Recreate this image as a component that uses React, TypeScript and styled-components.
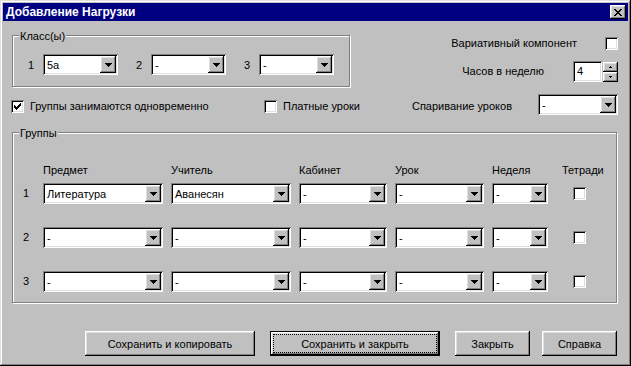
import styled, { createGlobalStyle, css } from "styled-components";

const GlobalStyle = createGlobalStyle`
  html, body {
    margin: 0;
    padding: 0;
    background: #c0c0c0;
  }
  body {
    font-family: "Liberation Sans", Arial, sans-serif;
    font-size: 11px;
    color: #000;
  }
`;

const raised = css`
  box-shadow: inset -1px -1px #000, inset 1px 1px #fff, inset -2px -2px #808080,
    inset 2px 2px #dfdfdf;
`;

const sunken = css`
  box-shadow: inset 1px 1px #808080, inset -1px -1px #fff, inset 2px 2px #000,
    inset -2px -2px #dfdfdf;
`;

const subjects = ["Литература", "-", "-"];
const teachers = ["Аванесян", "-", "-"];

const App = () => {
  return (
    <>
      <GlobalStyle />
      <Window>
        <TitleBar>
          <Title>Добавление Нагрузки</Title>
          <CloseButton>
            <svg width="8" height="7" viewBox="0 0 8 7" shapeRendering="crispEdges">
              <path
                d="M0 0h2v1H0zM6 0h2v1H6zM1 1h2v1H1zM5 1h2v1H5zM2 2h4v1H2zM3 3h2v1H3zM2 4h4v1H2zM1 5h2v1H1zM5 5h2v1H5zM0 6h2v1H0zM6 6h2v1H6z"
                fill="#000"
              />
            </svg>
          </CloseButton>
        </TitleBar>
        <Body>
          <TopArea>
            <Frame $w={338} $mt={14}>
              <FrameLabel>Класс(ы)</FrameLabel>
              <ClassRow>
                {["5а", "-", "-"].map((v, i) => (
                  <ClassItem key={i}>
                    <ClassNum>{i + 1}</ClassNum>
                    <Combo value={v} width={75} />
                  </ClassItem>
                ))}
              </ClassRow>
            </Frame>
            <RightColumn>
              <RightRow $gap={28}>
                <Text>Вариативный компонент</Text>
                <CheckBox />
              </RightRow>
              <RightRow $gap={29} $mt={11}>
                <Text>Часов в неделю</Text>
                <SpinEdit>
                  <EditField>4</EditField>
                  <SpinButtons>
                    <SpinButton>
                      <svg width="3" height="2" viewBox="0 0 3 2" shapeRendering="crispEdges">
                        <path d="M1 0h1v1H1zM0 1h3v1H0z" fill="#000" />
                      </svg>
                    </SpinButton>
                    <SpinButton>
                      <svg width="3" height="2" viewBox="0 0 3 2" shapeRendering="crispEdges">
                        <path d="M0 0h3v1H0zM1 1h1v1H1z" fill="#000" />
                      </svg>
                    </SpinButton>
                  </SpinButtons>
                </SpinEdit>
              </RightRow>
            </RightColumn>
          </TopArea>

          <OptionsRow>
            <Option $w={253} $ml={-1}>
              <CheckBox checked />
              <Text>Группы занимаются одновременно</Text>
            </Option>
            <Option>
              <CheckBox />
              <Text>Платные уроки</Text>
            </Option>
            <Pairing>
              <PairingLabel>Спаривание уроков</PairingLabel>
              <Combo value="-" width={80} />
            </Pairing>
          </OptionsRow>

          <Frame $mt={17} $mr={1}>
            <FrameLabel>Группы</FrameLabel>
            <GroupsBody>
              <GridRow $header>
                <span />
                <HeaderCell>Предмет</HeaderCell>
                <HeaderCell>Учитель</HeaderCell>
                <HeaderCell>Кабинет</HeaderCell>
                <HeaderCell>Урок</HeaderCell>
                <HeaderCell>Неделя</HeaderCell>
                <HeaderCell $pl={6}>Тетради</HeaderCell>
              </GridRow>
              <Rows>
                {subjects.map((s, i) => (
                  <GridRow key={i}>
                    <Text>{i + 1}</Text>
                    <Combo value={s} width={120} />
                    <Combo value={teachers[i]} width={120} />
                    <Combo value="-" width={88} />
                    <Combo value="-" width={89} />
                    <Combo value="-" width={56} />
                    <CheckCell>
                      <CheckBox />
                    </CheckCell>
                  </GridRow>
                ))}
              </Rows>
            </GroupsBody>
          </Frame>

          <ButtonRow>
            <Button $w={170}>Сохранить и копировать</Button>
            <Button $w={170} $ml={15} $default>
              Сохранить и закрыть
            </Button>
            <Button $w={75} $ml={15}>
              Закрыть
            </Button>
            <Button $w={75} $ml={12}>
              Справка
            </Button>
          </ButtonRow>
        </Body>
      </Window>
    </>
  );
};

const Combo = ({ value, width }: { value: string; width: number }) => (
  <ComboBox $w={width}>
    <ComboText>{value}</ComboText>
    <DropButton>
      <svg width="7" height="4" viewBox="0 0 7 4" shapeRendering="crispEdges">
        <path d="M0 0h7v1H0zM1 1h5v1H1zM2 2h3v1H2zM3 3h1v1H3z" fill="#000" />
      </svg>
    </DropButton>
  </ComboBox>
);

const CheckBox = ({ checked }: { checked?: boolean }) => (
  <Box>
    {checked && (
      <svg width="7" height="7" viewBox="0 0 7 7" shapeRendering="crispEdges">
        <path
          d="M6 0h1v1H6zM5 1h2v1H5zM0 2h1v1H0zM4 2h3v1H4zM0 3h2v1H0zM3 3h3v1H3zM0 4h5v1H0zM1 5h3v1H1zM2 6h1v1H2z"
          fill="#000"
        />
      </svg>
    )}
  </Box>
);

export default App;

const Window = styled.div`
  box-sizing: border-box;
  width: 631px;
  height: 366px;
  padding: 3px;
  background: #c0c0c0;
  box-shadow: inset -1px -1px #000, inset 1px 1px #dfdfdf, inset -2px -2px #808080,
    inset 2px 2px #fff;
  display: flex;
  flex-direction: column;
`;

const TitleBar = styled.div`
  height: 18px;
  background: #000080;
  display: flex;
  align-items: center;
  justify-content: space-between;
  padding: 0 2px 0 3px;
`;

const Title = styled.span`
  color: #fff;
  font-size: 12px;
  font-weight: bold;
  line-height: 14px;
`;

const CloseButton = styled.span`
  width: 16px;
  height: 14px;
  background: #c0c0c0;
  ${raised};
  display: flex;
  align-items: center;
  justify-content: center;
`;

const Body = styled.div`
  flex: 1;
  display: flex;
  flex-direction: column;
  padding: 0 10px 0 9px;
`;

const TopArea = styled.div`
  display: flex;
  justify-content: space-between;
  align-items: flex-start;
`;

const Frame = styled.div<{ $w?: number; $mt?: number; $mr?: number }>`
  box-sizing: border-box;
  ${(p) => p.$w && `width: ${p.$w}px;`}
  margin-top: ${(p) => p.$mt || 0}px;
  margin-right: ${(p) => p.$mr || 0}px;
  border: 1px solid #808080;
  box-shadow: 1px 1px 0 #fff, inset 1px 1px 0 #fff;
  display: flex;
  flex-direction: column;
  align-items: flex-start;
`;

const FrameLabel = styled.span`
  margin: -7px 0 0 6px;
  padding: 0 1px;
  background: #c0c0c0;
  line-height: 14px;
`;

const ClassRow = styled.div`
  display: flex;
  align-items: center;
  gap: 18px;
  margin-top: 11px;
  padding: 0 15px 11px;
`;

const ClassItem = styled.div`
  display: flex;
  align-items: center;
`;

const ClassNum = styled.span`
  width: 15px;
  line-height: 14px;
`;

const Text = styled.span`
  line-height: 13px;
  white-space: nowrap;
`;

const RightColumn = styled.div`
  display: flex;
  flex-direction: column;
  align-items: flex-end;
  padding-top: 16px;
`;

const RightRow = styled.div<{ $gap: number; $mt?: number }>`
  display: flex;
  align-items: center;
  gap: ${(p) => p.$gap}px;
  margin-top: ${(p) => p.$mt || 0}px;
`;

const SpinEdit = styled.div`
  display: flex;
  gap: 1px;
`;

const EditField = styled.div`
  box-sizing: border-box;
  width: 29px;
  height: 21px;
  padding: 2px 0 0 4px;
  background: #fff;
  ${sunken};
  line-height: 16px;
`;

const SpinButtons = styled.div`
  display: flex;
  flex-direction: column;
  margin-top: 1px;
`;

const SpinButton = styled.span`
  width: 15px;
  height: 10px;
  background: #c0c0c0;
  ${raised};
  display: flex;
  align-items: center;
  justify-content: center;
`;

const OptionsRow = styled.div`
  display: flex;
  align-items: flex-start;
  height: 21px;
  margin-top: 7px;
`;

const Option = styled.div<{ $w?: number; $ml?: number }>`
  display: flex;
  align-items: center;
  gap: 6px;
  height: 14px;
  margin-top: 5px;
  margin-left: ${(p) => p.$ml || 0}px;
  ${(p) => p.$w && `width: ${p.$w}px;`}
`;

const Pairing = styled.div`
  margin-left: auto;
  display: flex;
  align-items: flex-start;
  gap: 26px;
`;

const PairingLabel = styled.span`
  margin-top: 5px;
  line-height: 14px;
`;

const GroupsBody = styled.div`
  display: flex;
  flex-direction: column;
  margin-top: 23px;
  padding: 0 0 10px 10px;
`;

const GridRow = styled.div<{ $header?: boolean }>`
  display: grid;
  grid-template-columns: 12px 120px 120px 88px 89px 56px 50px;
  column-gap: 8px;
  align-items: center;
  ${(p) => p.$header && `margin-bottom: 6px;`}
`;

const HeaderCell = styled.span<{ $pl?: number }>`
  line-height: 14px;
  padding-left: ${(p) => p.$pl || 0}px;
  white-space: nowrap;
`;

const Rows = styled.div`
  display: flex;
  flex-direction: column;
  gap: 23px;
`;

const CheckCell = styled.div`
  display: flex;
  padding-left: 17px;
`;

const ComboBox = styled.div<{ $w: number }>`
  box-sizing: border-box;
  width: ${(p) => p.$w}px;
  height: 21px;
  padding: 2px;
  background: #fff;
  ${sunken};
  display: flex;
  align-items: center;
`;

const ComboText = styled.span`
  flex: 1;
  padding-left: 2px;
  line-height: 14px;
  white-space: nowrap;
  overflow: hidden;
`;

const DropButton = styled.span`
  width: 16px;
  height: 17px;
  background: #c0c0c0;
  ${raised};
  display: flex;
  align-items: center;
  justify-content: center;
`;

const Box = styled.span`
  box-sizing: border-box;
  width: 13px;
  height: 13px;
  flex-shrink: 0;
  background: #fff;
  ${sunken};
  display: flex;
  align-items: center;
  justify-content: center;
`;

const ButtonRow = styled.div`
  display: flex;
  justify-content: flex-end;
  margin: 28px 1px 0 0;
`;

const Button = styled.button<{ $w: number; $ml?: number; $default?: boolean }>`
  box-sizing: border-box;
  width: ${(p) => p.$w}px;
  height: 25px;
  margin-left: ${(p) => p.$ml || 0}px;
  padding: 0;
  border: 0;
  background: #c0c0c0;
  font-family: "Liberation Sans", Arial, sans-serif;
  font-size: 11px;
  color: #000;
  ${raised};
  ${(p) =>
    p.$default &&
    css`
      box-shadow: inset 0 0 0 1px #000, inset -2px -2px #000, inset 2px 2px #fff,
        inset -3px -3px #808080, inset 3px 3px #dfdfdf;
      outline: 1px dotted #000;
      outline-offset: -4px;
    `}
`;
